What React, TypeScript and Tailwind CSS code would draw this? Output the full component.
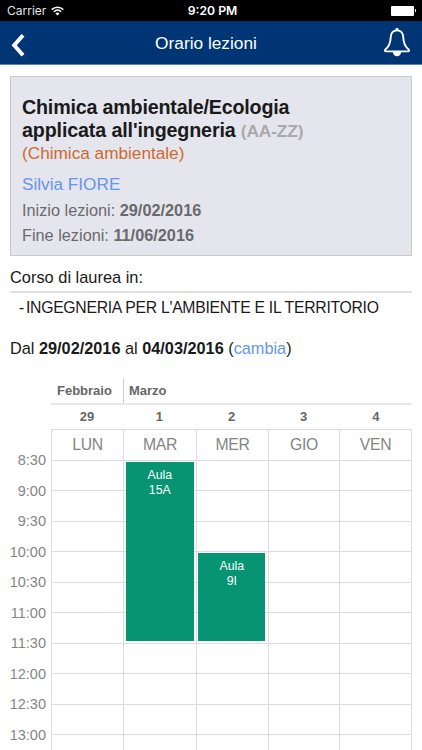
import React from 'react';

const times = ['8:30', '9:00', '9:30', '10:00', '10:30', '11:00', '11:30', '12:00', '12:30', '13:00'];

const days = [
    { num: '29', name: 'LUN' },
    { num: '1', name: 'MAR' },
    { num: '2', name: 'MER' },
    { num: '3', name: 'GIO' },
    { num: '4', name: 'VEN' }
];

// place is the column and the half-hour rows that the lesson covers
const lessons = [
    { room: '15A', place: 'col-start-2 row-start-1 row-span-6 ml-[3px] mr-[2.5px]' },
    { room: '9I', place: 'col-start-3 row-start-4 row-span-3 ml-[2.4px] mr-[2.7px]' }
];

export default function App() {
    return (
        <div className="w-[422px] h-[750px] overflow-hidden bg-white text-[#1a1a1a] font-['Liberation_Sans',Arial,sans-serif]">
            <StatusBar />
            <Header />

            <main className="px-[10px] pt-[11px]">
                {/* Course card */}
                <section className="h-[180px] border border-[#c9c9cc] bg-[#e5e5ee] pl-[11px] pt-[19px]">
                    <h1 className="text-[19.7px] leading-[23px] font-bold tracking-[-0.19px]">
                        Chimica ambientale/Ecologia<br />
                        <span className="tracking-[-0.14px]">applicata all'ingegneria</span> <span className="text-[17.4px] text-[#aaaaac]">(AA-ZZ)</span>
                    </h1>
                    <p className="text-[17.2px] leading-[21px] text-[#cf6a2c]">(Chimica ambientale)</p>
                    <p className="mt-[9px] text-[17.2px] leading-[22px] text-[#6495ed]">Silvia FIORE</p>
                    <div className="mt-[3px] text-[16.3px] leading-[25.3px] text-[#6a6a6d]">
                        <p>Inizio lezioni: <b>29/02/2016</b></p>
                        <p>Fine lezioni: <b>11/06/2016</b></p>
                    </div>
                </section>

                <h2 className="mt-[10px] h-[27px] border-b-2 border-[#dfdfdf] text-[16.4px] leading-[22px]">Corso di laurea in:</h2>
                <p className="mt-[4px] pl-[9px] flex gap-[2px] text-[15.75px] leading-[22px] tracking-[-0.28px] whitespace-nowrap">
                    <span>-</span>
                    <span>INGEGNERIA PER L'AMBIENTE E IL TERRITORIO</span>
                </p>
                <p className="mt-[18px] text-[16.3px] leading-[22px]">
                    Dal <b>29/02/2016</b> al <b>04/03/2016</b> (<span className="text-[#6495ed]">cambia</span>)
                </p>
            </main>

            <Timetable />
        </div>
    );
}

function StatusBar() {
    return (
        <div className="h-[21px] bg-black px-[7px] grid grid-cols-3 items-center text-white">
            <div className="flex items-center gap-[5px] text-[12px] font-['Inter',sans-serif] text-[#e4e4e4]">
                Carrier
                <svg width="13" height="10" viewBox="0 0 13 10" fill="none" stroke="#ffffff" strokeWidth="1.5">
                    <path d="M0.7 3.6 C4 0.3 9 0.3 12.3 3.6" />
                    <path d="M2.8 5.8 C5 3.7 8 3.7 10.2 5.8" />
                    <path d="M4.5 7.4 C5.7 6.3 7.3 6.3 8.5 7.4 L6.5 9.5 Z" fill="#ffffff" stroke="none" />
                </svg>
            </div>
            <div className="pl-[3px] pt-px text-center text-[12.2px] leading-[18px] font-semibold font-['Inter',sans-serif]">9:20 PM</div>
            <div className="flex items-center justify-end">
                <div className="w-[23px] h-[10px] rounded-[1px] bg-white"></div>
                <div className="w-px h-[3px] bg-white ml-px -mr-px"></div>
            </div>
        </div>
    );
}

function Header() {
    return (
        <header className="h-[44px] bg-[#003575] border-b border-[#5b7fa6] pl-[11px] pr-[11px] flex items-center text-white">
            <svg className="mt-[5px]" width="16" height="26" viewBox="0 0 16 26" fill="none" stroke="currentColor" strokeWidth="4">
                <path d="M12 3.2 L3.2 13.2 L12 23.2" />
            </svg>
            <span className="flex-1 pl-[2px] text-center text-[17.3px] leading-[22px]">Orario lezioni</span>
            <svg className="-mt-px" width="28" height="30" viewBox="0 0 28 30" fill="none" stroke="currentColor" strokeWidth="1.9">
                <path d="M14 3.4 C9.8 3.4 7.9 6.4 7.7 10.5 C7.5 16.5 6.2 19.4 2.3 22.6 C1.6 23.5 1.9 24.4 2.8 24.4 H25.2 C26.1 24.4 26.4 23.5 25.7 22.6 C21.8 19.4 20.5 16.5 20.3 10.5 C20.1 6.4 18.2 3.4 14 3.4 Z" strokeLinejoin="round" />
                <circle cx="14" cy="2.4" r="1.6" fill="currentColor" stroke="none" />
                <path d="M9.8 25 A4.2 4.2 0 0 0 18.2 25 Z" fill="currentColor" stroke="none" />
            </svg>
        </header>
    );
}

function Timetable() {
    return (
        <div className="mt-[19px] flex">
            {/* Hours */}
            <div className="w-[51px] shrink-0 pt-[67px] pr-[5px] text-right text-[14.5px] text-[#858585]">
                {times.map((t) => (
                    <div key={t} className="h-[30.55px] leading-[30.55px]">{t}</div>
                ))}
            </div>

            <div className="w-[361px]">
                <div className="h-[27px] border-b-2 border-[#e8e8e8] flex text-[13px] leading-[26px] font-bold text-[#666666]">
                    <div className="w-[72px] pl-[6px]">Febbraio</div>
                    <div className="border-l border-[#cfcfcf] pl-[5px]">Marzo</div>
                </div>
                <div className="h-[24px] grid grid-cols-5 text-center text-[13px] leading-[23px] font-bold text-[#666666]">
                    {days.map((d) => (
                        <div key={d.num}>{d.num}</div>
                    ))}
                </div>
                <div className="h-[31.5px] grid grid-cols-[72px_73px_72px_71px_72px] border-y border-r border-[#dcdcdc] text-center text-[15.75px] leading-[30px] tracking-[-0.3px] text-[#858585]">
                    {days.map((d) => (
                        <div key={d.name} className="border-l border-[#dcdcdc]">{d.name}</div>
                    ))}
                </div>
                <div className="grid grid-cols-[72px_73px_72px_71px_72px] auto-rows-[30.55px] border-r border-[#dcdcdc]">
                    {times.map((t, row) =>
                        days.map((d, col) => (
                            <div
                                key={t + d.name}
                                className="border-l border-b border-[#dcdcdc]"
                                style={{ gridColumn: col + 1, gridRow: row + 1 }}
                            />
                        ))
                    )}
                    {lessons.map((l) => (
                        <div
                            key={l.room}
                            className={`${l.place} mt-[1px] mb-[3px] pt-[6px] bg-[#069473] text-white text-center text-[12.3px] leading-[15px]`}
                        >
                            Aula<br />{l.room}
                        </div>
                    ))}
                </div>
            </div>
        </div>
    );
}
